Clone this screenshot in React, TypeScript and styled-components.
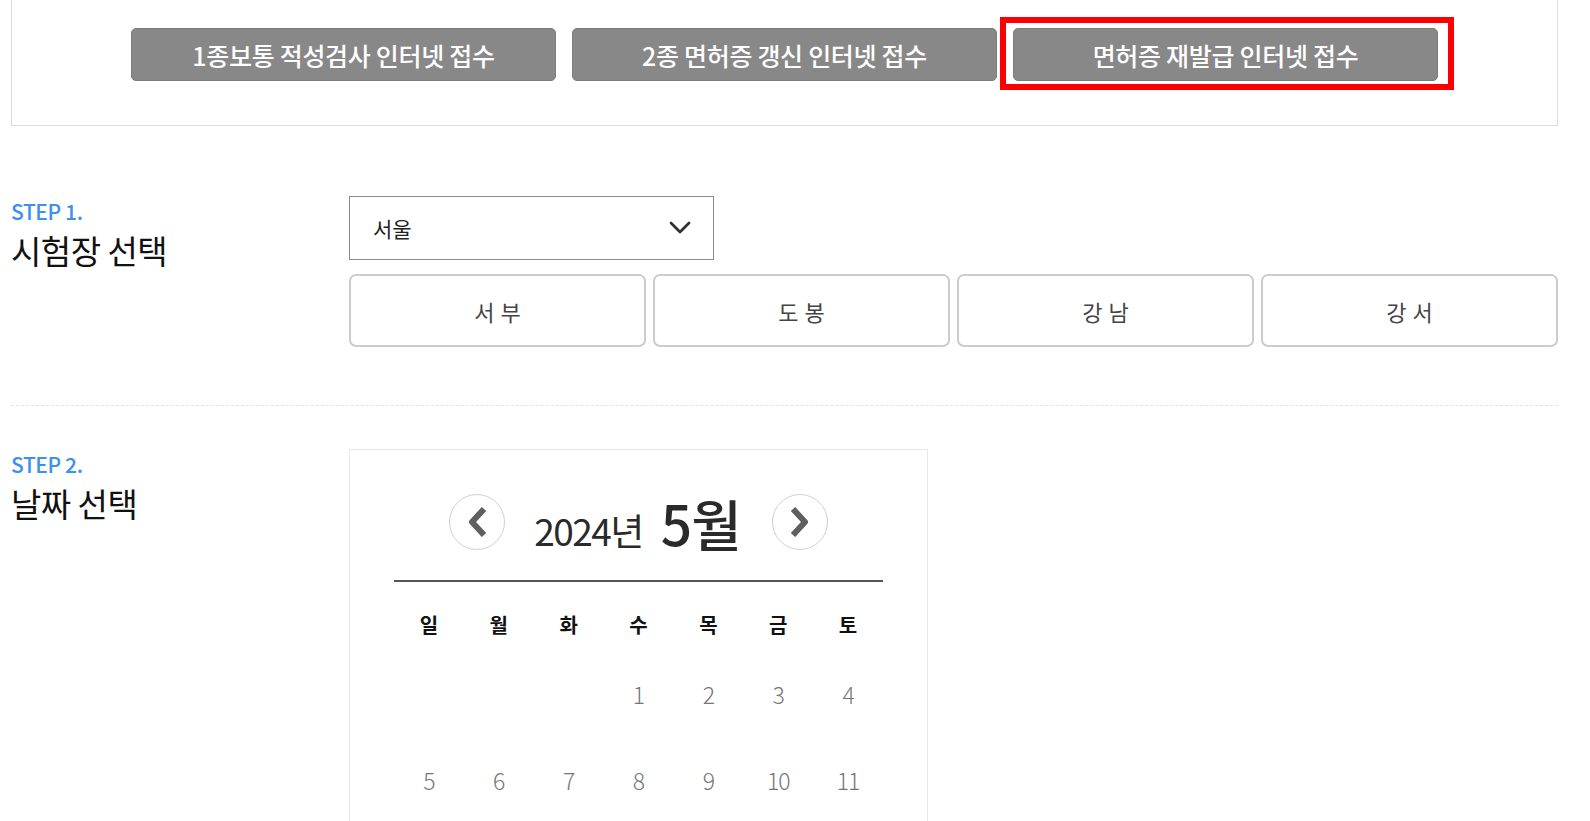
import React, { useState } from "react";
import styled, { createGlobalStyle } from "styled-components";

const GlobalStyle = createGlobalStyle`
  html, body {
    margin: 0;
    padding: 0;
    background: #fff;
    font-family: "Noto Sans CJK KR", "Noto Sans", sans-serif;
    color: #222;
  }
  * { box-sizing: border-box; }
`;

const Page = styled.div`
  width: 1547px;
  margin-left: 11px;
`;

const ApplyBox = styled.div`
  display: flex;
  justify-content: center;
  gap: 16px;
  height: 126px;
  padding-top: 28px;
  border: 1px solid #dcdcdc;
  border-top: none;
`;

const ApplyButton = styled.button`
  position: relative;
  width: 425px;
  height: 53px;
  border: 1px solid #7c7c7c;
  border-radius: 5px;
  background: #888888;
  color: #fff;
  font-family: inherit;
  font-size: 25px;
  font-weight: 500;
  letter-spacing: -0.3px;
  cursor: pointer;
`;

const Highlight = styled.span`
  position: absolute;
  left: -14px;
  right: -17px;
  top: -12px;
  bottom: -10px;
  border: 6px solid #ff0000;
  pointer-events: none;
`;

const Step = styled.section<{ $top: number }>`
  display: flex;
  padding-top: ${(p) => p.$top}px;
`;

const Label = styled.div`
  width: 338px;
  flex-shrink: 0;
  padding-top: 2px;
`;

const StepNo = styled.div`
  color: #3d8ff0;
  font-size: 21px;
  font-weight: 500;
  line-height: 26px;
  letter-spacing: -0.4px;
`;

const StepTitle = styled.div`
  margin-top: 4px;
  font-size: 33px;
  line-height: 44px;
  color: #111;
  letter-spacing: -0.5px;
`;

const Content = styled.div`
  flex: 1;
  display: flex;
  flex-direction: column;
`;

const Select = styled.div`
  display: flex;
  align-items: center;
  justify-content: space-between;
  width: 365px;
  height: 64px;
  padding: 0 22px 0 23px;
  border: 1px solid #8c8c8c;
  font-size: 21px;
  color: #222;
`;

const CenterRow = styled.div`
  display: grid;
  grid-template-columns: repeat(4, 1fr);
  gap: 7px;
  margin-top: 14px;
`;

const CenterButton = styled.button`
  height: 73px;
  border: 2px solid #cccccc;
  border-radius: 7px;
  background: #fff;
  font-family: inherit;
  font-size: 22px;
  color: #444;
  letter-spacing: 6px;
  text-indent: 6px;
  cursor: pointer;
`;

const Divider = styled.hr`
  margin: 58px 0 0;
  border: none;
  border-top: 1px dashed #e2e2e2;
`;

const Calendar = styled.div`
  width: 579px;
  height: 420px;
  border: 1px solid #e8e8e8;
  border-bottom: none;
  padding: 43px 44px 0;
`;

const Header = styled.div`
  display: flex;
  align-items: center;
  justify-content: center;
  height: 58px;
`;

const NavButton = styled.button`
  display: flex;
  align-items: center;
  justify-content: center;
  width: 56px;
  height: 56px;
  padding: 0;
  border: 1px solid #cfcfcf;
  border-radius: 50%;
  background: #fff;
  cursor: pointer;
`;

const MonthTitle = styled.div`
  display: flex;
  align-items: baseline;
  margin: 0 31px 0 29px;
  color: #2a2a2a;
`;

const Year = styled.span`
  font-size: 37px;
  letter-spacing: -1.5px;
`;

const Month = styled.span`
  margin-left: 18px;
  font-size: 55px;
  font-weight: 500;
  letter-spacing: -1px;
`;

const Rule = styled.div`
  height: 2px;
  margin-top: 29px;
  background: #555;
`;

const Grid = styled.div`
  display: grid;
  grid-template-columns: repeat(7, 1fr);
  grid-template-rows: 69px;
  grid-auto-rows: 86px;
`;

const WeekHead = styled.div`
  display: flex;
  align-items: center;
  justify-content: center;
  padding-top: 16px;
  font-size: 20px;
  font-weight: 700;
  color: #111;
`;

const Day = styled.div`
  display: flex;
  align-items: center;
  justify-content: center;
  font-size: 23px;
  font-weight: 300;
  color: #777;
  letter-spacing: -1px;
`;

function Chevron({ dir }: { dir: "left" | "right" }) {
  return (
    <svg width="26" height="36" viewBox="0 0 26 36">
      <path
        d={dir === "left" ? "M20 5 L8 18 L20 31" : "M6 5 L18 18 L6 31"}
        fill="none"
        stroke="#5f5f5f"
        strokeWidth="6"
        strokeLinecap="butt"
        strokeLinejoin="round"
      />
    </svg>
  );
}

const weekdays = ["일", "월", "화", "수", "목", "금", "토"];
const days: (number | null)[] = [null, null, null, 1, 2, 3, 4, 5, 6, 7, 8, 9, 10, 11];

export default function App() {
  const [center, setCenter] = useState("");

  return (
    <Page>
      <GlobalStyle />
      <ApplyBox>
        <ApplyButton>1종보통 적성검사 인터넷 접수</ApplyButton>
        <ApplyButton>2종 면허증 갱신 인터넷 접수</ApplyButton>
        <ApplyButton>
          면허증 재발급 인터넷 접수
          <Highlight />
        </ApplyButton>
      </ApplyBox>

      <Step $top={70}>
        <Label>
          <StepNo>STEP 1.</StepNo>
          <StepTitle>시험장 선택</StepTitle>
        </Label>
        <Content>
          <Select>
            <span>서울</span>
            <svg width="22" height="14" viewBox="0 0 22 14">
              <path
                d="M2 2 L11 11 L20 2"
                fill="none"
                stroke="#333"
                strokeWidth="2.8"
                strokeLinecap="round"
                strokeLinejoin="round"
              />
            </svg>
          </Select>
          <CenterRow>
            {["서부", "도봉", "강남", "강서"].map((name) => (
              <CenterButton key={name} onClick={() => setCenter(name)} aria-pressed={center === name}>
                {name}
              </CenterButton>
            ))}
          </CenterRow>
        </Content>
      </Step>

      <Divider />

      <Step $top={43}>
        <Label>
          <StepNo>STEP 2.</StepNo>
          <StepTitle>날짜 선택</StepTitle>
        </Label>
        <Content>
          <Calendar>
            <Header>
              <NavButton aria-label="이전 달">
                <Chevron dir="left" />
              </NavButton>
              <MonthTitle>
                <Year>2024년</Year>
                <Month>5월</Month>
              </MonthTitle>
              <NavButton aria-label="다음 달">
                <Chevron dir="right" />
              </NavButton>
            </Header>
            <Rule />
            <Grid>
              {weekdays.map((w) => (
                <WeekHead key={w}>{w}</WeekHead>
              ))}
              {days.map((d, i) => (
                <Day key={i}>{d ?? ""}</Day>
              ))}
            </Grid>
          </Calendar>
        </Content>
      </Step>
    </Page>
  );
}
